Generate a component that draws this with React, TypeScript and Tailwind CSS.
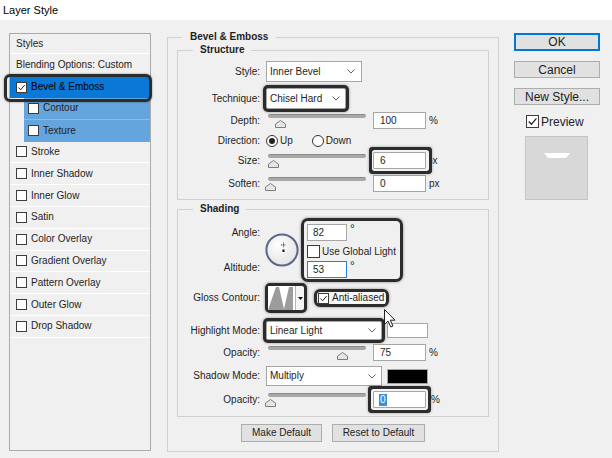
import React from "react";

function Box({ on, big }: { on?: boolean; big?: boolean }) {
  return (
    <span
      className={`shrink-0 flex items-center justify-center bg-white border border-[#3c3c3c] ${
        big ? "w-[13px] h-[13px]" : "w-[11px] h-[11px]"
      }`}
    >
      {on && (
        <svg viewBox="0 0 10 10" className="w-full h-full">
          <path d="M1.6 5 L4 7.5 L8.6 2.2" fill="none" stroke="#222" strokeWidth="1.1" />
        </svg>
      )}
    </span>
  );
}

function Chevron() {
  return (
    <svg width="8" height="5" viewBox="0 0 8 5" className="shrink-0">
      <path d="M0.5 0.5 L4 4 L7.5 0.5" fill="none" stroke="#606060" strokeWidth="1" />
    </svg>
  );
}

function Slider({ at }: { at: number }) {
  return (
    <div className="relative w-[107px] h-[17px] shrink-0">
      <div className="ml-[2px] mt-[4px] w-[98px] h-[4px] rounded-full bg-[#a8a8a8] border-t border-[#8a8a8a]" />
      <svg width="11" height="8" viewBox="0 0 11 8" className="absolute top-[6px] block" style={{ left: at - 5.5 }}>
        <path d="M5.5 0.5 L10.5 4 L10.5 7.5 L0.5 7.5 L0.5 4 Z" fill="#e4e4e4" stroke="#7d7d7d" />
      </svg>
    </div>
  );
}

function Label({ children }: { children: React.ReactNode }) {
  return <div className="w-[83px] shrink-0 text-right pr-[1px]">{children}</div>;
}

const effects = [
  "Stroke",
  "Inner Shadow",
  "Inner Glow",
  "Satin",
  "Color Overlay",
  "Gradient Overlay",
  "Pattern Overlay",
  "Outer Glow",
  "Drop Shadow",
];

export default function App() {
  return (
    <div className="relative w-[612px] h-[458px] overflow-hidden bg-[#f0f0f0] text-[#1e1e1e] font-['Liberation_Sans',Arial,sans-serif] text-[10px] leading-[12px]">
      {/* title bar */}
      <div className="h-[20px] bg-white flex items-center pl-[3px] text-[11px] text-black">Layer Style</div>

      <div className="flex items-start">
        {/* styles list */}
        <div className="ml-[9px] mt-[13px] w-[142px] h-[418px] border border-[#ababab] flex flex-col">
          <div className="h-[20px] flex items-center pl-[6px] border-b border-white">Styles</div>
          <div className="h-[22px] flex items-center pl-[6px] border-b border-white">Blending Options: Custom</div>
          <div className="relative h-[22px] flex items-center gap-[4px] pl-[6px] bg-[#0a78d7]">
            <Box on />
            <span className="text-black">Bevel &amp; Emboss</span>
            <div className="absolute -left-[6px] -top-[2px] -right-[2px] -bottom-[4px] border-[3px] border-[#2c2c2c] rounded-[6px] shadow-[0_0_2px_rgba(0,0,0,0.5)]" />
          </div>
          <div className="h-[21.8px] ml-[14px] flex items-center gap-[4px] pl-[4px] bg-[#65a5dd] border-b border-[#8cbbe6]">
            <Box />
            <span>Contour</span>
          </div>
          <div className="h-[21.8px] ml-[14px] flex items-center gap-[4px] pl-[4px] bg-[#65a5dd]">
            <Box />
            <span>Texture</span>
          </div>
          {effects.map((e) => (
            <div key={e} className="h-[21.8px] flex items-center gap-[4px] pl-[6px] border-b border-white">
              <Box />
              <span>{e}</span>
            </div>
          ))}
        </div>

        {/* Bevel & Emboss group */}
        <fieldset className="ml-[16px] mt-[11px] w-[332px] border border-[#d0d0d0]">
          <legend className="ml-[14px] px-[8px] font-bold">Bevel &amp; Emboss</legend>
          <div className="px-[9px] pb-[9px]">
            {/* Structure */}
            <fieldset className="mt-[1px] border border-[#d0d0d0]">
              <legend className="ml-[15px] px-[7px] font-bold">Structure</legend>
              <div className="pt-[5px] pb-[7px] flex flex-col">
                <div className="h-[21px] flex items-center">
                  <Label>Style:</Label>
                  <div className="ml-[5px] w-[96px] h-[21px] bg-white border border-[#a6a6a6] flex items-center justify-between pl-[3px] pr-[6px]">
                    <span>Inner Bevel</span>
                    <Chevron />
                  </div>
                </div>
                <div className="mt-[6px] h-[21px] flex items-center">
                  <Label>Technique:</Label>
                  <div className="ml-[5px] w-[80px] h-[21px] bg-white border border-[#a6a6a6] rounded-[2px] flex items-center justify-between pl-[3px] pr-[5px] shadow-[0_0_0_3px_#2c2c2c,0_0_3px_3px_rgba(0,0,0,0.4)]">
                    <span>Chisel Hard</span>
                    <Chevron />
                  </div>
                </div>
                <div className="mt-[3px] h-[17px] flex items-center">
                  <Label>Depth:</Label>
                  <div className="ml-[5px]">
                    <Slider at={14} />
                  </div>
                  <div className="w-[53px] h-[17px] bg-white border border-[#a6a6a6] flex items-center pl-[6px]">100</div>
                  <span className="ml-[3px]">%</span>
                </div>
                <div className="mt-[5px] h-[14px] flex items-center">
                  <Label>Direction:</Label>
                  <span className="ml-[5px] w-[12px] h-[12px] rounded-full border border-[#333] bg-white flex items-center justify-center">
                    <span className="w-[6px] h-[6px] rounded-full bg-[#222]" />
                  </span>
                  <span className="ml-[2px]">Up</span>
                  <span className="ml-[19px] w-[12px] h-[12px] rounded-full border border-[#333] bg-white" />
                  <span className="ml-[2px]">Down</span>
                </div>
                <div className="mt-[4px] h-[17px] flex items-center">
                  <Label>Size:</Label>
                  <div className="ml-[5px]">
                    <Slider at={7} />
                  </div>
                  <div className="relative z-10 w-[53px] h-[17px] bg-white border border-[#a6a6a6] rounded-[1px] flex items-center pl-[6px] shadow-[1px_0_0_2px_#f4f4f4,1px_0_0_5px_#2c2c2c,1px_0_3px_5px_rgba(0,0,0,0.35)]">
                    6
                  </div>
                  <span className="ml-[1px]">px</span>
                </div>
                <div className="mt-[6px] h-[17px] flex items-center">
                  <Label>Soften:</Label>
                  <div className="ml-[5px]">
                    <Slider at={4} />
                  </div>
                  <div className="w-[53px] h-[17px] bg-white border border-[#a6a6a6] flex items-center pl-[6px]">0</div>
                  <span className="ml-[3px]">px</span>
                </div>
              </div>
            </fieldset>

            {/* Shading */}
            <fieldset className="mt-[3px] border border-[#d0d0d0]">
              <legend className="ml-[15px] px-[7px] font-bold">Shading</legend>
              <div className="pb-[8px] flex flex-col">
                <div className="mt-[3px] h-[64px] flex items-start">
                  <div className="w-[83px] shrink-0 flex flex-col items-end pr-[1px]">
                    <span className="mt-[9px]">Angle:</span>
                    <span className="mt-[23px]">Altitude:</span>
                  </div>
                  <svg width="34" height="34" viewBox="0 0 34 34" className="ml-[4px] mt-[15px] shrink-0">
                    <defs>
                      <radialGradient id="dial" cx="0.4" cy="0.35" r="0.7">
                        <stop offset="0" stopColor="#ffffff" />
                        <stop offset="1" stopColor="#e2e2e2" />
                      </radialGradient>
                    </defs>
                    <circle cx="17" cy="17" r="15.6" fill="url(#dial)" stroke="#5a6888" strokeWidth="2" />
                    <path d="M18.5 9.5 V14.5 M16 12 H21" stroke="#444" strokeWidth="1" strokeDasharray="1 0.6" />
                    <rect x="17.5" y="16.5" width="2" height="2.5" fill="#111" />
                  </svg>
                  <div className="ml-[2px] w-[102px] h-[64px] border-[3px] border-[#2c2c2c] rounded-[7px] shadow-[0_0_3px_rgba(0,0,0,0.45)] pl-[3px] pt-[3px] flex flex-col">
                    <div className="flex items-start">
                      <div className="w-[40px] h-[17px] bg-white border border-[#a6a6a6] flex items-center pl-[5px]">82</div>
                      <span className="ml-[3px] -mt-[1px] text-[12px]">°</span>
                    </div>
                    <div className="mt-[4px] flex items-center gap-[2px]">
                      <Box big />
                      <span>Use Global Light</span>
                    </div>
                    <div className="mt-[3px] flex items-start">
                      <div className="w-[40px] h-[17px] bg-white border border-[#2a7fd8] flex items-center pl-[5px]">53</div>
                      <span className="ml-[3px] -mt-[1px] text-[12px]">°</span>
                    </div>
                  </div>
                </div>

                <div className="mt-[1px] h-[30px] flex items-center">
                  <Label>Gloss Contour:</Label>
                  <div className="ml-[4px] h-[30px] w-[42px] border-[3px] border-[#2c2c2c] rounded-[5px] shadow-[0_0_3px_rgba(0,0,0,0.45)] flex bg-[#f4f4f4]">
                    <svg width="27" height="24" viewBox="0 0 27 24" className="shrink-0">
                      <rect width="27" height="24" fill="#fff" />
                      <polygon points="0,24 8,1 11,1 16,23 21,1 25,1 25,24" fill="#9c9c9c" />
                    </svg>
                    <div className="w-[1px] bg-[#b5b5b5]" />
                    <div className="flex-1 flex items-center justify-center">
                      <svg width="5" height="3" viewBox="0 0 5 3">
                        <polygon points="0,0 5,0 2.5,3" fill="#111" />
                      </svg>
                    </div>
                  </div>
                  <div className="ml-[7px] h-[18px] px-[1px] border-[3px] border-[#2c2c2c] rounded-[6px] shadow-[0_0_3px_rgba(0,0,0,0.45)] flex items-center gap-[3px]">
                    <Box on />
                    <span className="bg-[#f8f8f8] pr-[1px]">Anti-aliased</span>
                  </div>
                </div>

                <div className="mt-[8px] h-[19px] flex items-center">
                  <Label>Highlight Mode:</Label>
                  <div className="ml-[5px] w-[116px] h-[19px] bg-white border border-[#a6a6a6] rounded-[2px] flex items-center justify-between pl-[3px] pr-[5px] shadow-[0_0_0_3px_#2c2c2c,0_0_3px_3px_rgba(0,0,0,0.4)]">
                    <span>Linear Light</span>
                    <Chevron />
                  </div>
                  <div className="ml-[5px] w-[41px] h-[15px] bg-white border border-[#a6a6a6]" />
                </div>

                <div className="mt-[4px] h-[17px] flex items-center">
                  <Label>Opacity:</Label>
                  <div className="ml-[5px]">
                    <Slider at={76} />
                  </div>
                  <div className="w-[53px] h-[17px] bg-white border border-[#a6a6a6] flex items-center pl-[6px]">75</div>
                  <span className="ml-[3px]">%</span>
                </div>

                <div className="mt-[5px] h-[20px] flex items-center">
                  <Label>Shadow Mode:</Label>
                  <div className="ml-[5px] w-[116px] h-[20px] bg-white border border-[#a6a6a6] flex items-center justify-between pl-[3px] pr-[5px]">
                    <span>Multiply</span>
                    <Chevron />
                  </div>
                  <div className="ml-[5px] w-[41px] h-[15px] bg-black border border-[#a6a6a6]" />
                </div>

                <div className="mt-[5px] h-[17px] flex items-center">
                  <Label>Opacity:</Label>
                  <div className="ml-[5px]">
                    <Slider at={4} />
                  </div>
                  <div className="relative z-10 w-[53px] h-[17px] bg-white border border-[#a6a6a6] rounded-[1px] flex items-center pl-[5px] shadow-[0_0_0_2px_#f4f4f4,0_0_0_5px_#2c2c2c,0_0_3px_5px_rgba(0,0,0,0.35)]">
                    <span className="bg-[#3b8ee0] text-white px-[1px]">0</span>
                  </div>
                  <span className="ml-[5px]">%</span>
                </div>
              </div>
            </fieldset>

            <div className="mt-[7px] flex justify-center gap-[10px]">
              <div className="w-[81px] h-[18px] bg-[#e1e1e1] border border-[#adadad] flex items-center justify-center">
                Make Default
              </div>
              <div className="w-[93px] h-[18px] bg-[#e1e1e1] border border-[#adadad] flex items-center justify-center">
                Reset to Default
              </div>
            </div>
          </div>
        </fieldset>

        {/* right buttons */}
        <div className="ml-[15px] mt-[13px] w-[86px] flex flex-col text-[12px] leading-[14px]">
          <div className="h-[18px] bg-[#e1e1e1] border border-[#0078d7] shadow-[inset_0_0_0_1px_#0078d7] flex items-center justify-center">
            OK
          </div>
          <div className="mt-[10px] h-[17px] bg-[#e1e1e1] border border-[#adadad] flex items-center justify-center">
            Cancel
          </div>
          <div className="mt-[10px] h-[17px] bg-[#e1e1e1] border border-[#adadad] flex items-center justify-center">
            New Style...
          </div>
          <div className="mt-[8px] h-[17px] flex items-center pl-[12px] gap-[2px]">
            <Box on big />
            <span>Preview</span>
          </div>
          <div className="mt-[6px] ml-[11px] w-[63px] h-[64px] bg-[#d8d8d8] border border-[#c4c4c4] flex justify-center pt-[16px]">
            <svg width="26" height="6" viewBox="0 0 26 6">
              <polygon points="0,0 26,0 22,5 4,5" fill="#ffffff" />
            </svg>
          </div>
        </div>
      </div>

      {/* mouse cursor */}
      <svg width="13" height="20" viewBox="0 0 13 20" className="absolute left-[384px] top-[309px] z-20">
        <path d="M0.5 0.5 L0.5 15.5 L4 12 L6.8 18 L9 17 L6.3 11.2 L11 11.2 Z" fill="#fff" stroke="#222" strokeWidth="1" />
      </svg>
    </div>
  );
}
